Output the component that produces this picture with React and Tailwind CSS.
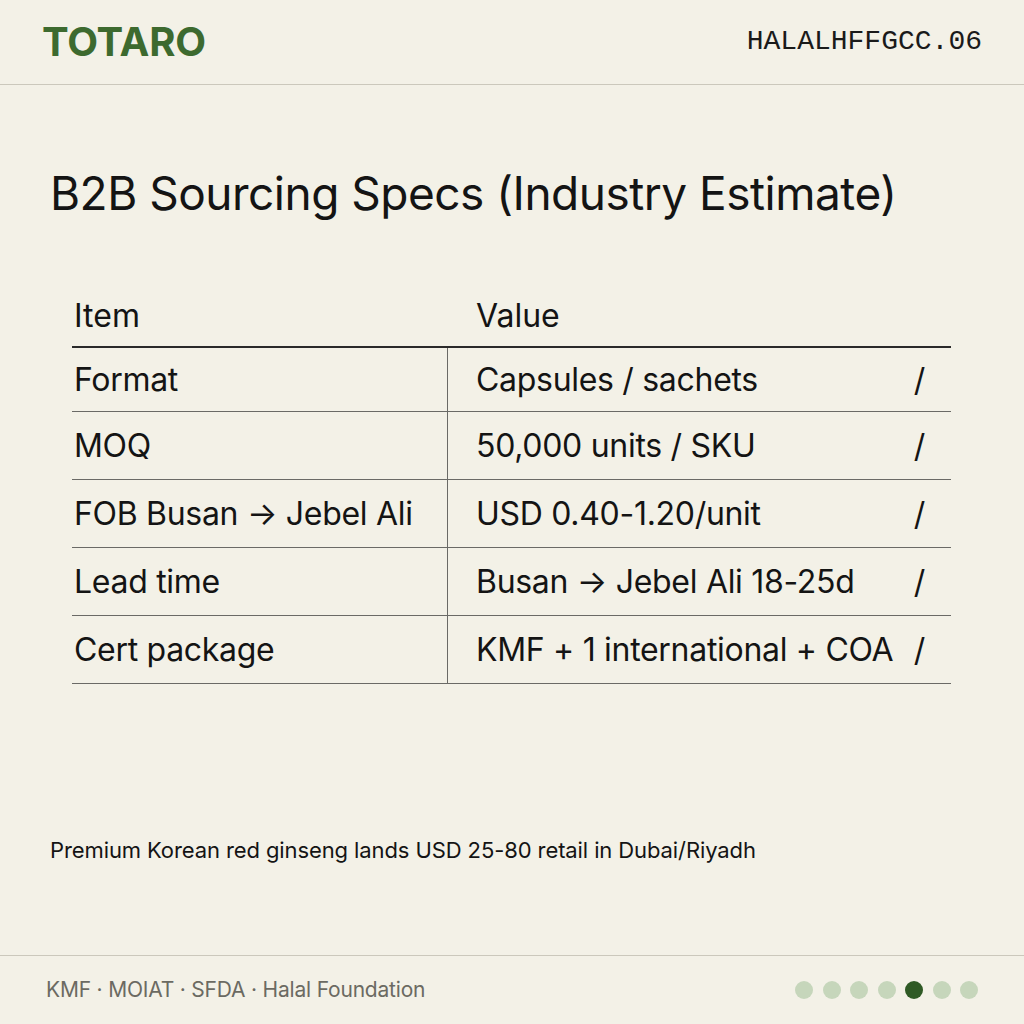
import React from 'react';

const rows = [
  { item: 'Format', value: 'Capsules / sachets' },
  { item: 'MOQ', value: '50,000 units / SKU' },
  { item: 'FOB Busan → Jebel Ali', value: 'USD 0.40-1.20/unit' },
  { item: 'Lead time', value: 'Busan → Jebel Ali 18-25d' },
  { item: 'Cert package', value: 'KMF + 1 international + COA' },
];

const dots = [0, 1, 2, 3, 4, 5, 6];

export default function App() {
  return (
    <div
      className="flex h-[1024px] w-[1024px] flex-col overflow-hidden bg-[#f3f1e7] text-[#141414]"
      style={{ fontFamily: 'Inter, "Liberation Sans", sans-serif' }}
    >
      {/* Header */}
      <header className="flex h-[85px] shrink-0 items-center justify-between border-b border-[#cbc8bc] pl-[42px] pr-[42px]">
        <div className="text-[40px] font-bold tracking-[-0.2px] text-[#3d6a2f]">TOTARO</div>
        <div className="text-[28px] text-[#1a1a1a]" style={{ fontFamily: '"Liberation Mono", monospace' }}>
          HALALHFFGCC.06
        </div>
      </header>

      <main className="flex flex-1 flex-col">
        <h1 className="ml-[50px] mt-[80px] text-[46px] leading-[56px] font-normal tracking-[-0.5px]">
          B2B Sourcing Specs (Industry Estimate)
        </h1>

        {/* Table */}
        <div className="ml-[72px] mt-[64px] w-[879px]">
          <div className="flex h-[63px] items-center border-b-2 border-[#2a2a2a] text-[32px]">
            <div className="w-[376px] pl-[2px]">Item</div>
            <div className="pl-[28px]">Value</div>
          </div>
          {rows.map((r, i) => (
            <div
              key={r.item}
              className={
                i === 0
                  ? 'flex h-[64px] items-center border-b border-[#6a6a66] text-[32px] tracking-[-0.3px]'
                  : 'flex h-[68px] items-center border-b border-[#6a6a66] text-[32px] tracking-[-0.3px]'
              }
            >
              <div className="flex h-full w-[376px] items-center border-r border-[#6a6a66] pl-[2px]">{r.item}</div>
              <div className="flex flex-1 items-center justify-between pl-[28px] pr-[26px]">
                <span>{r.value}</span>
                <span>/</span>
              </div>
            </div>
          ))}
        </div>

        <p className="ml-[50px] mt-[150px] text-[22px] tracking-[-0.1px]">
          Premium Korean red ginseng lands USD 25-80 retail in Dubai/Riyadh
        </p>
      </main>

      {/* Footer */}
      <footer className="flex h-[69px] shrink-0 items-center justify-between border-t border-[#cbc8bc] pl-[46px] pr-[46px]">
        <div className="text-[21px] text-[#6b6a62] tracking-[-0.2px]">
          KMF · MOIAT · SFDA · Halal Foundation
        </div>
        <div className="flex gap-[9.5px]">
          {dots.map((d) => (
            <span
              key={d}
              className={d === 4 ? 'h-[18px] w-[18px] rounded-full bg-[#2f5a25]' : 'h-[18px] w-[18px] rounded-full bg-[#c6d6bb]'}
            />
          ))}
        </div>
      </footer>
    </div>
  );
}
